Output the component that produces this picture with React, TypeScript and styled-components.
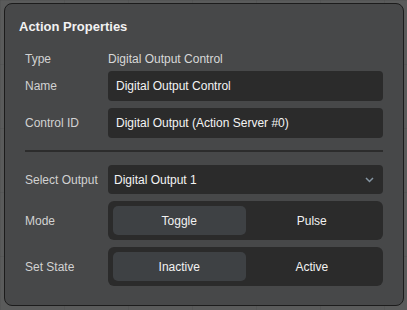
import React, { useState } from 'react';
import styled, { createGlobalStyle } from 'styled-components';

const GlobalStyle = createGlobalStyle`
	html, body {
		margin: 0;
		padding: 0;
		background-color: #5a5b5b;
		background-image:
			linear-gradient(90deg, rgba(0, 0, 0, 0.05) 1px, transparent 1px),
			linear-gradient(rgba(0, 0, 0, 0.05) 1px, transparent 1px);
		background-size: 64px 64px;
		font-family: 'Liberation Sans', Arial, sans-serif;
		height: 310px;
		overflow: hidden;
	}
`;

const Panel = styled.div`
	box-sizing: border-box;
	margin: 3px 0 0 4px;
	width: 400px;
	height: 303px;
	border: 1px solid #1c1c1c;
	border-radius: 8px;
	background: #474849;
	padding: 0 20px 0 19px;
	display: flex;
	flex-direction: column;
`;

const Title = styled.div`
	padding-top: 15px;
	line-height: 16px;
	font-size: 13px;
	font-weight: 700;
	color: #f2f2f2;
	margin-left: -5px;
`;

const Row = styled.div<{ top: number; h: number }>`
	display: grid;
	grid-template-columns: 84px 1fr;
	align-items: center;
	margin-top: ${(p) => p.top}px;
	height: ${(p) => p.h}px;
`;

const Label = styled.div`
	font-size: 12px;
	color: #d2d2d2;
	padding-left: 1px;
	white-space: nowrap;
`;

const Value = styled.div`
	font-size: 12px;
	color: #d8d8d8;
`;

const Field = styled.div`
	box-sizing: border-box;
	height: 100%;
	background: #2b2b2b;
	border-radius: 4px;
	display: flex;
	align-items: center;
	padding-left: 8px;
	font-size: 12px;
	color: #f4f4f4;
`;

const Select = styled(Field)`
	padding-left: 6px;
	padding-right: 9px;
	justify-content: space-between;
`;

const Divider = styled.div`
	margin-top: 12px;
	height: 2px;
	background: #2c2c2c;
	margin-left: 1px;
`;

const Segmented = styled.div`
	box-sizing: border-box;
	height: 100%;
	background: #2b2b2b;
	border-radius: 6px;
	padding: 5px;
	display: grid;
	grid-template-columns: 1fr 1fr;
`;

const Segment = styled.button<{ active?: boolean }>`
	border: none;
	border-radius: 5px;
	background: ${(p) => (p.active ? '#3e4144' : 'transparent')};
	color: #f2f2f2;
	font-family: inherit;
	font-size: 12px;
	cursor: pointer;
	padding: 0;
`;

const Chevron = () => (
	<svg width="9" height="6" viewBox="0 0 9 6">
		<path d="M1 1l3.5 3.5L8 1" fill="none" stroke="#8595a2" strokeWidth="1.5" />
	</svg>
);

export default function App() {
	const [mode, setMode] = useState(0);
	const [state, setState] = useState(0);

	return (
		<>
			<GlobalStyle />
			<Panel>
				<Title>Action Properties</Title>
				<Row top={14} h={20}>
					<Label>Type</Label>
					<Value>Digital Output Control</Value>
				</Row>
				<Row top={2} h={30}>
					<Label>Name</Label>
					<Field>Digital Output Control</Field>
				</Row>
				<Row top={7} h={30}>
					<Label>Control ID</Label>
					<Field>Digital Output (Action Server #0)</Field>
				</Row>
				<Divider />
				<Row top={13} h={29}>
					<Label>Select Output</Label>
					<Select>
						<span>Digital Output 1</span>
						<Chevron />
					</Select>
				</Row>
				<Row top={7} h={39}>
					<Label>Mode</Label>
					<Segmented>
						<Segment active={mode === 0} onClick={() => setMode(0)}>
							Toggle
						</Segment>
						<Segment active={mode === 1} onClick={() => setMode(1)}>
							Pulse
						</Segment>
					</Segmented>
				</Row>
				<Row top={7} h={39}>
					<Label>Set State</Label>
					<Segmented>
						<Segment active={state === 0} onClick={() => setState(0)}>
							Inactive
						</Segment>
						<Segment active={state === 1} onClick={() => setState(1)}>
							Active
						</Segment>
					</Segmented>
				</Row>
			</Panel>
		</>
	);
}
